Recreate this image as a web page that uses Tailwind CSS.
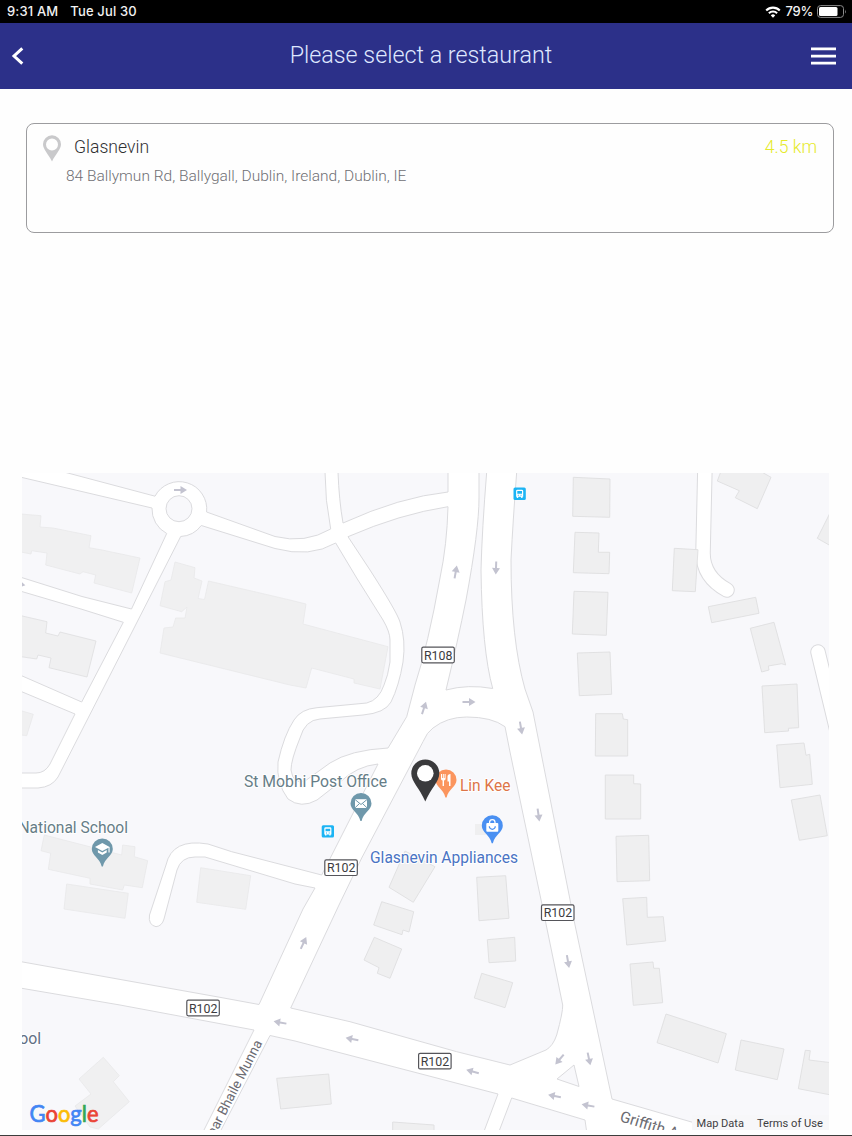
<!DOCTYPE html>
<html lang="en">
<head>
    <meta charset="UTF-8">
    <meta name="viewport" content="width=device-width, initial-scale=1.0">
    <title>Please select a restaurant</title>

    <!-- Tailwind CSS -->
    <script src="https://cdn.jsdelivr.net/npm/@tailwindcss/browser@4"></script>
</head>
<body class="bg-[#fefefe] font-[Roboto,sans-serif]">
    <div class="h-[1136px] flex flex-col overflow-hidden">
        <!-- Status bar -->
        <div class="h-[23px] shrink-0 bg-black text-[#f2f2f2] flex items-center justify-between pl-[7px] pr-[5px] font-[Inter,sans-serif] font-medium text-[13px] leading-none">
            <div class="flex gap-[12px] tracking-[0.15px]">
                <span>9:31 AM</span>
                <span>Tue Jul 30</span>
            </div>
            <div class="flex items-center">
                <svg class="w-[16px] h-[12px]" viewBox="0 0 16 12" fill="none" stroke="#fff" stroke-width="2.1">
                    <path d="M1.2 4.4a9.6 9.6 0 0 1 13.6 0"/>
                    <path d="M3.9 7.2a5.8 5.8 0 0 1 8.2 0"/>
                    <path d="M8 11.8 5.8 9.4a3.1 3.1 0 0 1 4.4 0z" fill="#fff" stroke="none"/>
                </svg>
                <span class="ml-[5px] tracking-[-0.3px]">79%</span>
                <svg class="ml-[4px] w-[30px] h-[13px]" viewBox="0 0 30 13">
                    <rect x="0.5" y="0.6" width="26" height="11.8" rx="3" fill="none" stroke="#8a8a8a"/>
                    <rect x="2" y="2.1" width="18.500" height="8.8" rx="1.5" fill="#fff"/>
                    <path d="M28 4.500q1.500 2 0 4z" fill="#8a8a8a"/>
                </svg>
            </div>
        </div>

        <!-- Header -->
        <header class="h-[66px] shrink-0 bg-[#2c3089] grid grid-cols-[40px_1fr_50px] items-center">
            <button class="pl-[11px]">
                <svg class="w-[13px] h-[18px]" viewBox="0 0 13 18" fill="none" stroke="#fff" stroke-width="3">
                    <path d="M11.3 1.3 3 9l8.300 7.700"/>
                </svg>
            </button>
            <h1 class="text-center text-[#dfe7ff] font-light text-[23.3px] leading-none whitespace-nowrap">Please select a restaurant</h1>
            <button class="pl-[9px]">
                <svg class="w-[25px] h-[18px]" viewBox="0 0 25 18" fill="#fff">
                    <path d="M0 .6h25v2.700H0zM0 7.700h25v2.700H0zM0 14.700h25v2.700H0z"/>
                </svg>
            </button>
        </header>

        <main class="flex-1 flex flex-col justify-between pt-[34px] pb-[5px]">
            <!-- Restaurant card -->
            <div class="ml-[26px] mr-[18px] h-[110px] border border-[#9c9c9f] rounded-lg pt-[11px] pl-[14px] pr-[16px]">
                <div class="flex items-center text-[17.6px] leading-[26px] font-light">
                    <svg class="w-[22px] h-[27px]" viewBox="0 0 22 27">
                        <path fill="#c9c9cb" fill-rule="evenodd" d="M11 0.300a9 9 0 0 1 9 9c0 5-5.500 10-9 17.200C7.500 19.300 2 14.300 2 9.300a9 9 0 0 1 9-9zm0 3.300a6 6 0 1 0 0 12 6 6 0 0 0 0-12z"/>
                    </svg>
                    <span class="ml-[11px] -mt-[3px] text-[#303033]">Glasnevin</span>
                    <span class="ml-auto -mt-[3px] text-[#e6ea2b]">4.5 km</span>
                </div>
                <p class="pl-[25px] pt-[3px] text-[15.5px] leading-[22px] font-light text-[#6f6f74] whitespace-nowrap">84 Ballymun Rd, Ballygall, Dublin, Ireland, Dublin, IE</p>
            </div>

            <!-- Map -->
            <svg class="ml-[22px] w-[807px] h-[657px] shrink-0 font-[Roboto,sans-serif]" viewBox="22 473 807 657">
                <defs>
                    <path id="arrow" d="M-6.500-1H0V-4L6.500 0 0 4V1H-6.500z"/>
                    <path id="pin" d="M0-10.500a10.500 10.500 0 0 1 10.500 10.500C10.500 6.500 2.500 9 .6 17.500h-1.200C-2.500 9-10.500 6.500-10.500 0A10.500 10.500 0 0 1 0-10.500z"/>
                    <g id="bus">
                        <rect width="12.300" height="12.300" rx="1.500" fill="#1cb4f4"/>
                        <path fill="#fff" fill-rule="evenodd" d="M2.600 3.400q0-1.300 1.300-1.300h4.500q1.300 0 1.300 1.300v5.800h-.7v1.200H7.600V9.200H4.700v1.200H3.300V9.200h-.7zm1.200.1v2.600h4.700V3.500zM4.300 7.200v1h1v-1zm2.700 0v1h1v-1z"/>
                    </g>
                </defs>

                <rect x="22" y="473" width="807" height="657" fill="#fff"/>

                <!-- Land between the roads -->
                <g fill="#f8f8fb" stroke="#dbdbde">
                    <path d="M64 472 155 496.200A27.500 27.500 0 0 1 206.600 512L275 536.500Q305 544 330.700 529Q325 500 325 472z"/>
                    <circle cx="179" cy="508.700" r="13"/>
                    <path d="M20 477 152 508A27.500 27.500 0 0 0 166.700 533.500L131.500 609 82 596.500 20 577z"/>
                    <path d="M20 591 81 609 123.300 622.300 81.700 702 20 675z"/>
                    <path d="M20 691 75 714 50 764Q45 773 36 773H20z"/>
                    <path d="M20 788H38Q52 787 58 777L105 685 180.700 536.500A27.500 27.500 0 0 0 201.300 525.500L275 548.500Q310 558 335.700 543L356.700 578 383 620Q390 632 390 640V662Q388 676 384 685 379 700 366.700 703L317 707.700Q301 709 294 720 284 735 278 762 276 783 288 799 301 809 317 800L340 782Q357 766 378 764L321.700 875 231.700 851.700 208 844Q172 838 166 865L149.500 915Q148 925 156 926.700 162 926 164 919L177 870Q181 857 195 857H205L295 884 315 888 303 909 259 1004.500 221 997.500 20 961.500z"/>
                    <path d="M348 536.700Q400 514 448 506.700 447 545 440 578 428 645 415 685L406.700 716.700 388 748Q350 750 330 763L305 781Q293 785 291 770 291 760 300 738 305 720 320 719L363 715Q385 713 391 702 399 686 403 662 406 640 400 622 397 612 370 570z"/>
                    <path d="M338 472Q339 500 343 523 400 497 448 492V472z"/>
                    <path d="M479 472H486.700Q482 530 481 570 482 650 492.700 688.500 468 684 446 690 458 640 466 600 479 530 479 498z"/>
                    <path d="M516.700 472Q513 520 511 560 511 640 525 689L533 712 575 925 612 1099 695 1123 725 1133H832V472z"/>
                    <path d="M433 728Q447 717 466.700 717 492 717 505 726.700L510 752 541.700 903 562.700 1005Q563 1012 556.700 1035 553 1046 546 1050L510 1065 456.700 1051.700 350 1021.700 290.700 1008 339 905 361.700 858 423 741.700Q427 732 433 728z"/>
                    <path d="M270 1035.500 295 1041 498 1094 483 1134H219z"/>
                    <path d="M20 988 120 1005 254 1030 202 1134H20z"/>
                    <path d="M511.700 1098 570 1115.500 585 1120 587 1134H498z"/>
                    <path d="M557 1079 574 1065 579 1086.500z"/>
                </g>

                <!-- Cul-de-sacs on the east side -->
                <g fill="none" stroke-linecap="round">
                    <g stroke="#dbdbde" stroke-width="15.500">
                        <path d="M705 465 703 553Q703 577 727 590"/>
                        <path d="M818 652 838 735"/>
                    </g>
                    <g stroke="#fff" stroke-width="13.500">
                        <path d="M705 465 703 553Q703 577 727 590"/>
                        <path d="M818 652 838 735"/>
                    </g>
                </g>

                <!-- Buildings, west -->
                <g fill="#f0f0f1" stroke="#e8e8ea" stroke-width="0.800">
                    <path d="M21 514 41 515.700 40 527 53 528 91 535.700 89 547.700 102 550 140 558 131.700 593 94 583 95.700 575 83 571.700 80 574 45.700 565 47 553 31.700 550.700 31 554 21 552z"/>
                    <path stroke="#dedee0" d="M21 615.700 47 621.700 45.700 633 58 636 60 632 96 641 87 677 49 667.700 51 658 38 655 36.700 659 21 656.700z"/>
                    <path d="M175 562 195 567.700 194 578 202 581 198 598.500 204.500 599.500 208.500 581 290 600 306 604 303 624 388 646.700 380 689 354 683 354 679 311.700 668 306 688 290 685 160 653 164 628 173 627 175.700 618 185 618 187 607 181.700 611.700 160 605.700 165 581.700 171 580z"/>
                    <path d="M21 710.700 33.300 714.300 26.700 735.700 21 735z"/>
                    <path d="M44.300 835 121.700 855 122.700 845 135 846.700 134.300 856.700 147.700 860.700 142.300 887.700 124.300 885 122.700 890 90 884V878.300L48.300 869.300 50.700 853.300 41 850.700z"/>
                    <path d="M66.700 884 128.300 893.300 125 918.300 64 909z"/>
                    <path d="M200.700 867.700 250.700 875.700 245.700 909.300 196.700 902.300z"/>
                    <path d="M103.300 1057.300 119.300 1075.700 113.300 1081.700 129.300 1101.700 98.300 1129 90 1127 75 1106 91 1094 79 1079z"/>
                </g>

                <!-- Buildings, centre and east -->
                <g fill="#efeff0" stroke="#dfdfe0" stroke-width="0.900">
                    <path d="M276.700 1078.300 328.700 1074 331.300 1104 280.700 1109z"/>
                    <path d="M392.700 1122 434 1125V1132H392.700z"/>
                    <path d="M405 851 435 866.700 413.300 902.300 389 887.300z"/>
                    <path d="M381.700 901.700 413.700 911.700 409 932 403 930 402 934.700 373.700 925z"/>
                    <path d="M374.300 937.300 401.700 949 390 978.300 377.300 973.300 379 967.700 364 960z"/>
                    <path d="M476.700 877.300 505.700 875.700 509 918.300 479 920.700z"/>
                    <path d="M487.300 939.700 514.700 937.300 515.700 961 489 962.700z"/>
                    <path d="M481.700 973.300 512.700 982.700 505 1007.700 474.300 998z"/>
                    <path stroke="none" d="M475 824H486V835H475z"/>
                    <path d="M573.300 477.300 610 479 609.700 517.300 572.700 516.300z"/>
                    <path d="M575 532.300 599 533 598.300 552.300H609.700L609 573.700 573.300 572.700z"/>
                    <path d="M574 591.300 608 592.300 606.300 635.300 572.300 634z"/>
                    <path d="M577.300 653 610 652 611.700 694.300 579.300 695.700z"/>
                    <path d="M595.700 713.700H622.300L623.300 719 627.700 719.700V756H595.300z"/>
                    <path d="M605.300 775H633.700V783.700L640.700 784V819H605.300z"/>
                    <path d="M616 836.300 648.700 835.300 649.700 880.700 617 881.700z"/>
                    <path d="M622.700 898.700 646.700 897.300 647.300 917.300 663.300 916.700 665.700 941 626.700 945z"/>
                    <path d="M630 964 653 962 653.700 968.300H659.300L662.700 1002.700 633.300 1005.300z"/>
                    <path d="M666 1014 726.300 1033.700 718 1063 657 1042.700z"/>
                    <path d="M741 1040 784 1049 777.300 1079.700 735.300 1070z"/>
                    <path d="M805.300 1050.300 810.300 1050.700 809 1060 831 1062.700V1095L798.300 1088.700z"/>
                    <path d="M674.300 548.300 698 549.700 695.300 591.700 672.300 590.700z"/>
                    <path d="M720.700 472H761.700L771 477.300 757.300 508.700 735.300 497.700 739.300 490.700 717.300 481z"/>
                    <path d="M830 513 817.300 538.300 830 545.500z"/>
                    <path d="M708.300 606.700 755.700 597.300 759 613.300 711.700 622.700z"/>
                    <path d="M750.300 628.300 774 622.300 785.700 665 781.700 663.700 768.300 666 769 670 761.700 672z"/>
                    <path d="M762 686 797 684 798.700 727.700 788.300 728.300 788.700 731 764.700 732.700z"/>
                    <path d="M776.700 745 804 743 806 755.300 809.700 754.300 812.300 784.300 780 787.700z"/>
                    <path d="M791.300 800 820 795 827.300 835.700 799.300 840.300z"/>
                </g>

                <!-- One-way arrows -->
                <g fill="#c3c3d0">
                    <use href="#arrow" transform="translate(180.500 490)"/>
                    <use href="#arrow" transform="translate(19 584) rotate(12)"/>
                    <use href="#arrow" transform="translate(455.700 572) rotate(-80)"/>
                    <use href="#arrow" transform="translate(496 568) rotate(92)"/>
                    <use href="#arrow" transform="translate(424 708) rotate(-72)"/>
                    <use href="#arrow" transform="translate(469 702)"/>
                    <use href="#arrow" transform="translate(521 728) rotate(80)"/>
                    <use href="#arrow" transform="translate(538.500 815) rotate(82)"/>
                    <use href="#arrow" transform="translate(568 961.500) rotate(80)"/>
                    <use href="#arrow" transform="translate(303.500 943) rotate(-65)"/>
                    <use href="#arrow" transform="translate(280 1022.500) rotate(190)"/>
                    <use href="#arrow" transform="translate(352 1039) rotate(192)"/>
                    <use href="#arrow" transform="translate(472.500 1071.500) rotate(195)"/>
                    <use href="#arrow" transform="translate(559.500 1059.500) rotate(130)"/>
                    <use href="#arrow" transform="translate(554.500 1096) rotate(192)"/>
                    <use href="#arrow" transform="translate(589 1059) rotate(78)"/>
                    <use href="#arrow" transform="translate(588 1105.500) rotate(190)"/>
                </g>

                <!-- Road numbers -->
                <g fill="#fff" stroke="#55555a" stroke-width="1.200">
                    <rect x="421.800" y="647.200" width="32.500" height="15.600" rx="1.500"/>
                    <rect x="324.800" y="859.900" width="32.500" height="15.600" rx="1.500"/>
                    <rect x="541.500" y="904.900" width="32.500" height="15.600" rx="1.500"/>
                    <rect x="186.800" y="1000.200" width="32.500" height="15.600" rx="1.500"/>
                    <rect x="418.600" y="1053.300" width="32.500" height="15.600" rx="1.500"/>
                </g>
                <g class="text-[13px]" fill="#3c3c40" text-anchor="middle">
                    <text x="438.200" y="659.800" textLength="28.500" lengthAdjust="spacingAndGlyphs">R108</text>
                    <text x="341.200" y="872.400" textLength="28.500" lengthAdjust="spacingAndGlyphs">R102</text>
                    <text x="557.900" y="917.400" textLength="28.500" lengthAdjust="spacingAndGlyphs">R102</text>
                    <text x="203.200" y="1012.700" textLength="28.500" lengthAdjust="spacingAndGlyphs">R102</text>
                    <text x="434.900" y="1065.800" textLength="28.500" lengthAdjust="spacingAndGlyphs">R102</text>
                </g>

                <!-- Street names -->
                <g fill="#6c6c72">
                    <text class="text-[13.600px]" text-anchor="end" transform="translate(262.500 1043) rotate(-63)">Bóthar Bhaile Munna</text>
                    <text class="text-[15.500px]" transform="translate(619 1121) rotate(17)">Griffith Avenue</text>
                </g>

                <!-- Places -->
                <g class="text-[15.800px]" stroke="#fff" stroke-width="2" paint-order="stroke" stroke-linejoin="round">
                    <text x="244" y="787.300" textLength="143" lengthAdjust="spacingAndGlyphs" fill="#667d87">St Mobhi Post Office</text>
                    <text x="18.500" y="833" textLength="109.500" lengthAdjust="spacingAndGlyphs" fill="#667d87">National School</text>
                    <text x="41" y="1043.500" text-anchor="end" fill="#5f6f84">School</text>
                    <text x="460" y="790.700" textLength="50.500" lengthAdjust="spacingAndGlyphs" fill="#dd7548">Lin Kee</text>
                    <text x="370" y="862.800" textLength="148" lengthAdjust="spacingAndGlyphs" fill="#4a74c4">Glasnevin Appliances</text>
                </g>

                <use href="#bus" x="513.500" y="487.600"/>
                <use href="#bus" x="321.700" y="825.200"/>

                <!-- Post office -->
                <g transform="translate(361 803.500)">
                    <use href="#pin" fill="#6f98ab"/>
                    <rect x="-6" y="-4.300" width="12" height="8.800" fill="#fff"/>
                    <path d="M-6-4 0 1 6-4M-6 4.300-1.500 0M6 4.300 1.500 0" fill="none" stroke="#6f98ab"/>
                </g>
                <!-- School -->
                <g transform="translate(102.300 849)">
                    <use href="#pin" fill="#6f98ab"/>
                    <path fill="#fff" d="M0-6 7.300-2V3.500H6.200V-1.300L0 2-7.300-2zM-4.400 1 0 3.400 4.400 1V3.600L0 6-4.400 3.600z"/>
                </g>
                <!-- Restaurant -->
                <g transform="translate(446 780)">
                    <use href="#pin" fill="#fb955e"/>
                    <path fill="#fff" d="M-5-6h1v4h.8v-4h1v4h.8v-4h1v4.700q0 1.600-1.600 1.900V6h-1.400V.6Q-5.100.3-5-1.300zM1.500-3.500Q1.600-6 4.500-6V6H3V1.500H1.500z"/>
                </g>
                <!-- Shop -->
                <g transform="translate(492.300 825.700)">
                    <use href="#pin" fill="#4a90f2"/>
                    <rect x="-6" y="-2.600" width="12" height="8.600" rx="1" fill="#fff"/>
                    <path d="M-2.700-2V-3.400a2.700 2.700 0 0 1 5.400 0V-2" fill="none" stroke="#fff" stroke-width="1.300"/>
                    <path d="M-3 .6a3 3 0 0 0 6 0" fill="none" stroke="#4a90f2" stroke-width="1.200"/>
                </g>
                <!-- Selected restaurant -->
                <path fill="#3a3a3c" d="M425.300 759.500a14 14 0 0 1 14 14c0 8-8.500 15-14 28-5.500-13-14-20-14-28a14 14 0 0 1 14-14z"/>
                <circle cx="425.300" cy="773.300" r="8.300" fill="#fff"/>

                <!-- Attribution -->
                <rect x="692" y="1115" width="137" height="15" fill="#f7f7f9"/>
                <g class="text-[11.500px]" fill="#3e3e42">
                    <text x="696.500" y="1126.700" textLength="47.500" lengthAdjust="spacingAndGlyphs">Map Data</text>
                    <text x="757" y="1126.700" textLength="66" lengthAdjust="spacingAndGlyphs">Terms of Use</text>
                </g>
                <text class="font-[Lato,sans-serif] text-[23px]" x="29.500" y="1121.500" textLength="69" lengthAdjust="spacingAndGlyphs" stroke-width="0.700"><tspan fill="#4285f4" stroke="#4285f4">G</tspan><tspan fill="#ea4335" stroke="#ea4335">o</tspan><tspan fill="#fbbc05" stroke="#fbbc05">o</tspan><tspan fill="#4285f4" stroke="#4285f4">g</tspan><tspan fill="#34a853" stroke="#34a853">l</tspan><tspan fill="#ea4335" stroke="#ea4335">e</tspan></text>
            </svg>
        </main>
        <div class="h-px shrink-0 bg-[#3c3c3c]"></div>
    </div>
</body>
</html>
